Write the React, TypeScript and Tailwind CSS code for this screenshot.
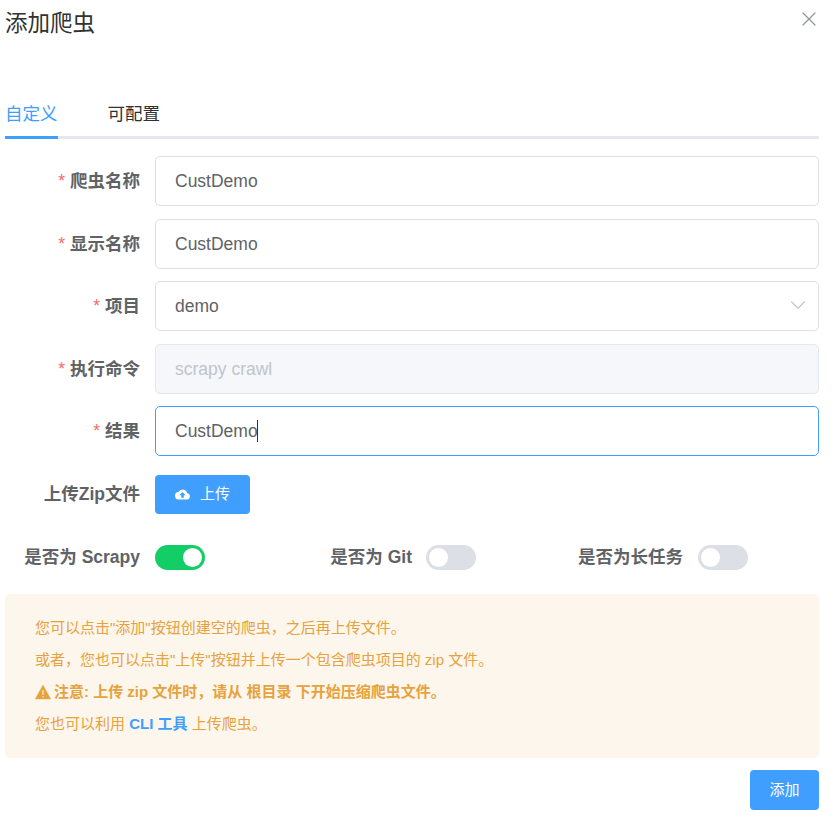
import { ChevronDown, X } from "lucide-react";

const FONT = "font-['Liberation_Sans','Noto_Sans_CJK_SC',sans-serif]";

function Label({ text, required, className = "" }: { text: string; required?: boolean; className?: string }) {
  return (
    <label className={`flex items-center justify-end text-[17.5px] font-bold text-[#606266] ${className}`}>
      {required && <span className="mr-[5px] font-normal text-[#f56c6c]">*</span>}
      {text}
    </label>
  );
}

function Field({ label, children }: { label: string; children: React.ReactNode }) {
  return (
    <div className="mb-[12.5px] flex h-[50px] items-center">
      <Label text={label} required className="w-[135px] shrink-0" />
      <div className="ml-[15px] h-full flex-1">{children}</div>
    </div>
  );
}

function Input({ value, state }: { value: string; state?: "focus" | "disabled" }) {
  const tone =
    state === "focus"
      ? "border-[#409eff] bg-white text-[#606266]"
      : state === "disabled"
        ? "border-[#e4e7ed] bg-[#f5f7fa] text-[#c0c4cc]"
        : "border-[#dcdfe6] bg-white text-[#606266]";
  return (
    <div className={`flex h-full items-center rounded-[5px] border px-[19px] text-[17.5px] ${tone}`}>
      {value}
      {state === "focus" && <span className="-ml-px h-[22px] w-px bg-[#303133]" />}
    </div>
  );
}

function Toggle({ on }: { on?: boolean }) {
  return (
    <span className={`flex h-[25px] w-[50px] items-center rounded-full p-[3px] ${on ? "justify-end bg-[#13ce66]" : "bg-[#dcdfe6]"}`}>
      <span className="h-[19px] w-[19px] rounded-full bg-white" />
    </span>
  );
}

export default function App() {
  return (
    <div className={`${FONT} h-[827px] w-[839px] overflow-hidden bg-white pl-[5px] pr-[20px]`}>
      <div className="flex h-[96px] items-start justify-between">
        <h2 className="mt-[9px] text-[22.5px] leading-[30px] font-normal text-[#303133]">添加爬虫</h2>
        <X className="mt-[7px] -mr-[2px] h-[24px] w-[24px] text-[#909399]" strokeWidth={1.2} />
      </div>

      <div className="mb-[17.25px] flex h-[43px] border-b-[3px] border-[#e4e7ed] text-[17.5px]">
        <span className="-mb-[3px] flex h-[43px] items-center border-b-[3px] border-[#409eff] pb-[4px] text-[#409eff]">自定义</span>
        <span className="ml-[50px] flex h-[40px] items-center pb-[4px] text-[#303133]">可配置</span>
      </div>

      <Field label="爬虫名称"><Input value="CustDemo" /></Field>
      <Field label="显示名称"><Input value="CustDemo" /></Field>
      <Field label="项目">
        <div className="relative h-full">
          <Input value="demo" />
          <ChevronDown className="absolute top-[11px] right-[8px] h-[26px] w-[26px] text-[#c0c4cc]" strokeWidth={1} />
        </div>
      </Field>
      <Field label="执行命令"><Input value="scrapy crawl" state="disabled" /></Field>
      <Field label="结果"><Input value="CustDemo" state="focus" /></Field>

      <div className="mt-[18.75px] mb-[31px] flex h-[39px] items-center">
        <Label text="上传Zip文件" className="w-[135px] shrink-0" />
        <button className="ml-[15px] flex h-[39px] w-[95px] items-center justify-center gap-[10px] rounded-[4px] bg-[#409eff] text-[15px] text-white">
          <svg viewBox="0 0 24 24" className="h-[15px] w-[15px]" fill="currentColor">
            <path d="M19.35 10.04A7.49 7.49 0 0 0 12 4a7.5 7.5 0 0 0-6.65 4.04A6 6 0 0 0 6 20h13a5 5 0 0 0 .35-9.96zM14 13v4h-4v-4H7l5-5 5 5h-3z" />
          </svg>
          上传
        </button>
      </div>

      <div className="flex h-[25px] items-center">
        <Label text="是否为 Scrapy" className="w-[135px] shrink-0" />
        <div className="ml-[15px]"><Toggle on /></div>
        <Label text="是否为 Git" className="w-[207px] shrink-0" />
        <div className="ml-[14px]"><Toggle /></div>
        <Label text="是否为长任务" className="w-[207px] shrink-0" />
        <div className="ml-[15px]"><Toggle /></div>
      </div>

      <div className="mt-[24px] flex h-[164px] flex-col justify-center gap-[12px] rounded-[5px] bg-[#fdf6ec] px-[30px] text-[15px] leading-[20px] text-[#e6a23c]">
        <p>您可以点击"添加"按钮创建空的爬虫，之后再上传文件。</p>
        <p>或者，您也可以点击"上传"按钮并上传一个包含爬虫项目的 zip 文件。</p>
        <p className="flex items-center gap-[3px] font-bold">
          <svg viewBox="0 0 16 16" className="h-[16px] w-[16px]" fill="currentColor">
            <path d="M8 1 .3 15h15.4L8 1zm-.8 5h1.600v5H7.200V6zm0 6h1.600v1.600H7.200V12z" fillRule="evenodd" stroke="currentColor" strokeWidth="0.4" strokeLinejoin="round" />
          </svg>
          注意: 上传 zip 文件时，请从 根目录 下开始压缩爬虫文件。
        </p>
        <p>
          您也可以利用 <span className="font-bold text-[#409eff]">CLI 工具</span> 上传爬虫。
        </p>
      </div>

      <div className="mt-[12px] flex justify-end">
        <button className="h-[40px] w-[69px] rounded-[4px] bg-[#409eff] text-[15px] text-white">添加</button>
      </div>
    </div>
  );
}
